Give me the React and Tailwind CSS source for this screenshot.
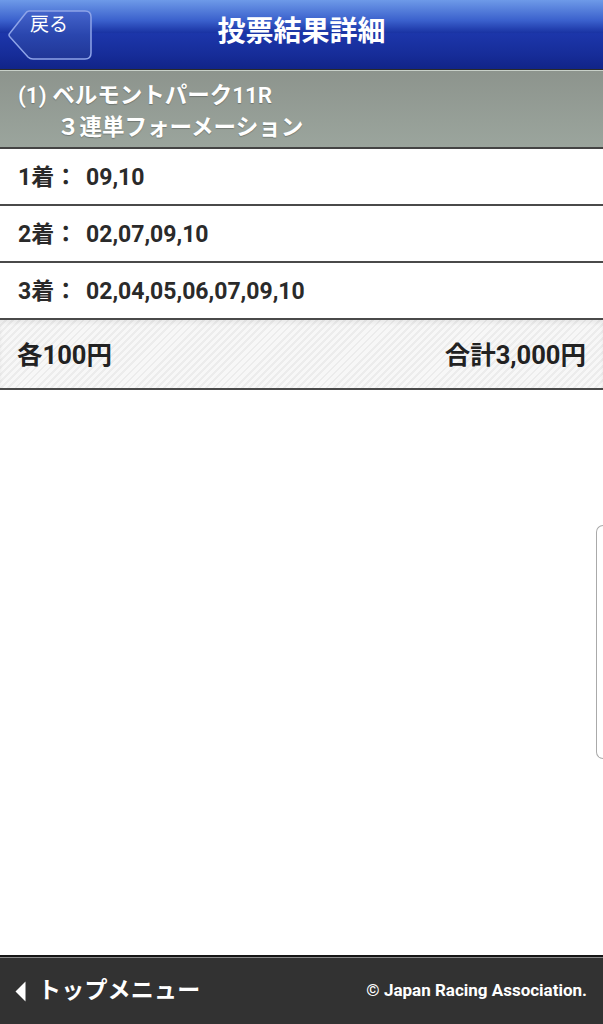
import React from 'react';

const font = { fontFamily: '"Roboto", "Noto Sans CJK JP", sans-serif' };

const BackButton = () => (
  <button className="relative h-[52px] w-[86px] ml-[7px]">
    <svg className="absolute inset-0" width="86" height="52" viewBox="0 0 86 52">
      <defs>
        <linearGradient id="bb" x1="0" y1="0" x2="0" y2="1">
          <stop offset="0" stopColor="#4565cc" />
          <stop offset="0.5" stopColor="#2a46ae" />
          <stop offset="1" stopColor="#203696" />
        </linearGradient>
      </defs>
      <path
        d="M22 2 H78 Q84 2 84 8 V44 Q84 50 78 50 H26 Q23 50 21 48 L3 28 Q1 26 3 24 L18 5 Q20 2 22 2 Z"
        fill="url(#bb)"
        stroke="#8ea4e8"
        strokeWidth="1.5"
      />
    </svg>
    <span className="absolute left-[23px] top-[6px] text-[19px] text-white leading-none">戻る</span>
  </button>
);

const rows = [
  { label: '1着：', value: '09,10' },
  { label: '2着：', value: '02,07,09,10' },
  { label: '3着：', value: '02,04,05,06,07,09,10' },
];

export default function App() {
  return (
    <div className="w-[603px] h-[1024px] flex flex-col bg-white" style={font}>
      {/* header */}
      <div className="relative h-[69px] flex items-center bg-[linear-gradient(to_bottom,#6e9ae8_0%,#3a60cc_30%,#1a34a4_47%,#1c36aa_49%,#162c98_80%,#112488_100%)]">
        <BackButton />
        <h1 className="absolute left-0 right-0 top-[18px] text-center text-[28px] font-bold text-white leading-none">
          投票結果詳細
        </h1>
      </div>
      <div className="h-[1px] bg-[#2a2a2a]" />
      <div className="h-[1px] bg-[#c8d0c8]" />

      {/* race info */}
      <div className="h-[76px] px-[18px] pt-[8px] bg-[linear-gradient(to_bottom,#8d948d,#9ba59d)] text-white text-[22.5px] font-semibold leading-[32px] [text-shadow:0_1px_1px_rgba(0,0,0,0.25)]">
        <div>(1) ベルモントパーク11R</div>
        <div className="pl-[39px]">３連単フォーメーション</div>
      </div>
      <div className="h-[2px] bg-[#444]" />

      {/* rows */}
      {rows.map((r) => (
        <div key={r.label}>
          <div className="h-[55px] flex items-center px-[18px] pt-[3px] text-[23px] font-bold text-[#2a2a2a]">
            <span className="w-[68px]">{r.label}</span>
            <span>{r.value}</span>
          </div>
          <div className="h-[2px] bg-[#4a4a4a]" />
        </div>
      ))}

      {/* total */}
      <div className="h-[68px] flex items-center justify-between px-[17px] pt-[2px] text-[25.5px] font-bold text-[#222] bg-[repeating-linear-gradient(135deg,#f7f7f7_0px,#f7f7f7_3px,#ececec_3px,#ececec_5px)] shadow-[inset_0_3px_4px_rgba(0,0,0,0.06)]">
        <span>各100円</span>
        <span>合計3,000円</span>
      </div>
      <div className="h-[2px] bg-[#4a4a4a]" />

      {/* body */}
      <div className="relative flex-1">
        <div className="absolute right-0 top-[135px] w-[7px] h-[234px] rounded-l-[8px] border border-r-0 border-[#aaa] bg-white" />
      </div>

      {/* footer */}
      <div className="h-[2px] bg-[#151515]" />
      <div className="h-[1px] bg-[#8a8a8a]" />
      <div className="h-[66px] flex items-center justify-between pl-[15px] pr-[16px] bg-[#323232] text-white">
        <div className="flex items-center gap-[12px]">
          <svg width="11" height="21" viewBox="0 0 11 21">
            <path d="M10.5 0.5 V20.5 L0.5 10.5 Z" fill="#fff" />
          </svg>
          <span className="text-[23px] font-bold tracking-[0.2px]">トップメニュー</span>
        </div>
        <span className="text-[17px] font-bold">© Japan Racing Association.</span>
      </div>
    </div>
  );
}
